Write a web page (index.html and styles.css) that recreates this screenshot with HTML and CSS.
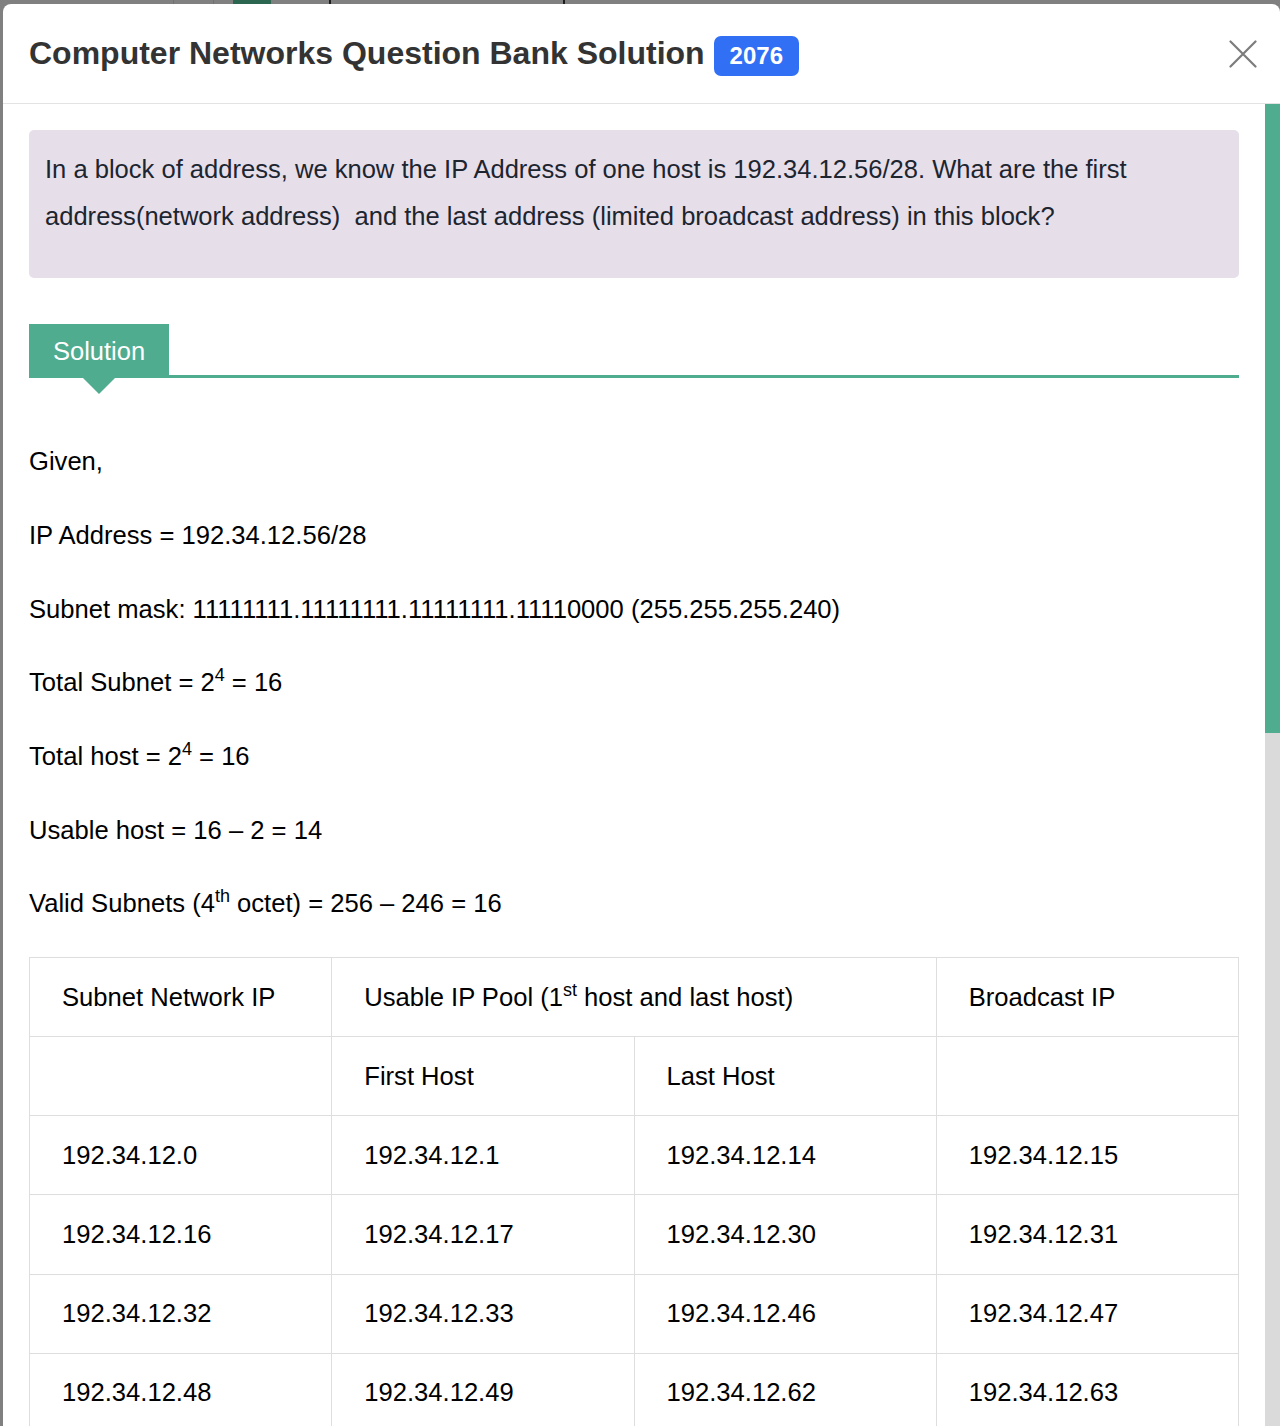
FILE: index.html
```html
<!DOCTYPE html>
<html lang="en">
<head>
<meta charset="utf-8">
<title>Computer Networks Question Bank Solution</title>
<link rel="stylesheet" href="styles.css">
</head>
<body>
<div class="backdrop-top">
  <span class="bd-line bd-a"></span>
  <span class="bd-line bd-b"></span>
  <span class="bd-green"></span>
  <span class="bd-mark bd-c"></span>
  <span class="bd-mark bd-d"></span>
</div>
<div class="modal">
  <header class="modal-header">
    <h1 class="modal-title">Computer Networks Question Bank Solution</h1>
    <span class="badge">2076</span>
    <button class="close" aria-label="Close">
      <svg width="28" height="28" viewBox="0 0 28 28"><path d="M1.5 1.5 L26.5 26.5 M26.5 1.5 L1.5 26.5" stroke="#7c7c7c" stroke-width="2.2" fill="none" stroke-linecap="round"/></svg>
    </button>
  </header>
  <div class="modal-body">
    <div class="content">
      <div class="question">
        <p>In a block of address, we know the IP Address of one host is 192.34.12.56/28. What are the first address(network address)&nbsp; and the last address (limited broadcast address) in this block?</p>
      </div>
      <div class="sol-head">
        <div class="tab">Solution</div>
        <div class="rule"></div>
      </div>
      <div class="solution">
        <p>Given,</p>
        <p>IP Address = 192.34.12.56/28</p>
        <p>Subnet mask: 11111111.11111111.11111111.11110000 (255.255.255.240)</p>
        <p>Total Subnet = 2<sup>4</sup> = 16</p>
        <p>Total host = 2<sup>4</sup> = 16</p>
        <p>Usable host = 16 – 2 = 14</p>
        <p>Valid Subnets (4<sup>th</sup> octet) = 256 – 246 = 16</p>
        <table class="subnets">
          <colgroup><col><col><col><col></colgroup>
          <tr><td>Subnet Network IP</td><td colspan="2">Usable IP Pool (1<sup>st</sup> host and last host)</td><td>Broadcast IP</td></tr>
          <tr><td></td><td>First Host</td><td>Last Host</td><td></td></tr>
          <tr><td>192.34.12.0</td><td>192.34.12.1</td><td>192.34.12.14</td><td>192.34.12.15</td></tr>
          <tr><td>192.34.12.16</td><td>192.34.12.17</td><td>192.34.12.30</td><td>192.34.12.31</td></tr>
          <tr><td>192.34.12.32</td><td>192.34.12.33</td><td>192.34.12.46</td><td>192.34.12.47</td></tr>
          <tr><td>192.34.12.48</td><td>192.34.12.49</td><td>192.34.12.62</td><td>192.34.12.63</td></tr>
        </table>
      </div>
    </div>
    <div class="scrollbar"><div class="thumb"></div></div>
  </div>
</div>
</body>
</html>
```

FILE: styles.css
```css
html, body {
  margin: 0;
  padding: 0;
}
body {
  background: #808080;
  font-family: "Liberation Sans", Arial, Helvetica, sans-serif;
  width: 1280px;
  height: 1426px;
  overflow: hidden;
}
.backdrop-top {
  height: 4px;
  display: flex;
  align-items: stretch;
}
.bd-line {
  width: 1px;
  background: #727272;
}
.bd-a { margin-left: 173px; }
.bd-b { margin-left: 39px; }
.bd-green {
  margin-left: 19px;
  width: 38px;
  background: #2c6650;
}
.bd-mark {
  width: 2px;
  background: #1e1e1e;
}
.bd-c { margin-left: 58px; }
.bd-d { margin-left: 232px; }

.modal {
  margin-left: 3px;
  width: 1277px;
  height: 1422px;
  background: #fff;
  border-radius: 8px 8px 0 0;
  display: flex;
  flex-direction: column;
  overflow: hidden;
}
.modal-header {
  height: 99px;
  flex: none;
  border-bottom: 1px solid #e3e3e3;
  display: flex;
  align-items: center;
  padding: 0 23px 0 26px;
}
.modal-title {
  margin: 0;
  font-size: 32px;
  font-weight: bold;
  color: #333;
}
.badge {
  margin-left: 9px;
  margin-top: 5px;
  height: 40px;
  padding: 0 16px;
  display: flex;
  align-items: center;
  background: #316ff5;
  color: #fff;
  font-weight: bold;
  font-size: 24px;
  border-radius: 7px;
}
.close {
  margin-left: auto;
  margin-top: 1px;
  border: 0;
  background: none;
  padding: 0;
  width: 28px;
  height: 28px;
  display: flex;
}
.modal-body {
  flex: 1;
  min-height: 0;
  display: flex;
}
.content {
  flex: 1;
  min-width: 0;
  padding: 26px 26px 0;
  overflow: hidden;
}
.scrollbar {
  width: 15px;
  flex: none;
  background: #dadada;
}
.thumb {
  height: 629px;
  background: #4fac8f;
}
.question {
  background: #e6dfea;
  border-radius: 5px;
  padding: 16px 16px 38px;
}
.question p {
  margin: 0;
  font-size: 25.55px;
  line-height: 47px;
  color: #1d2530;
}
.sol-head {
  margin-top: 46px;
  display: flex;
  align-items: flex-end;
}
.tab {
  position: relative;
  height: 54px;
  padding: 0 24px;
  display: flex;
  align-items: center;
  background: #4fac8f;
  color: #fff;
  font-size: 25.5px;
}
.tab::after {
  content: "";
  position: absolute;
  top: 100%;
  left: 50%;
  transform: translateX(-50%);
  border-left: 16px solid transparent;
  border-right: 16px solid transparent;
  border-top: 16px solid #4fac8f;
}
.rule {
  flex: 1;
  height: 3px;
  background: #4fac8f;
}
.solution {
  padding-top: 63.33px;
  color: #000;
  font-size: 25.6px;
}
.solution p {
  margin: 0 0 32.33px;
  line-height: 41.33px;
}
sup {
  font-size: 18px;
  line-height: 0;
  vertical-align: super;
}
.subnets {
  width: 100%;
  border-collapse: collapse;
  table-layout: fixed;
}
.subnets td {
  border: 1px solid #dedede;
  padding: 0 32px;
  height: 78.2px;
  font-size: 25.6px;
  color: #000;
  white-space: nowrap;
}
```
